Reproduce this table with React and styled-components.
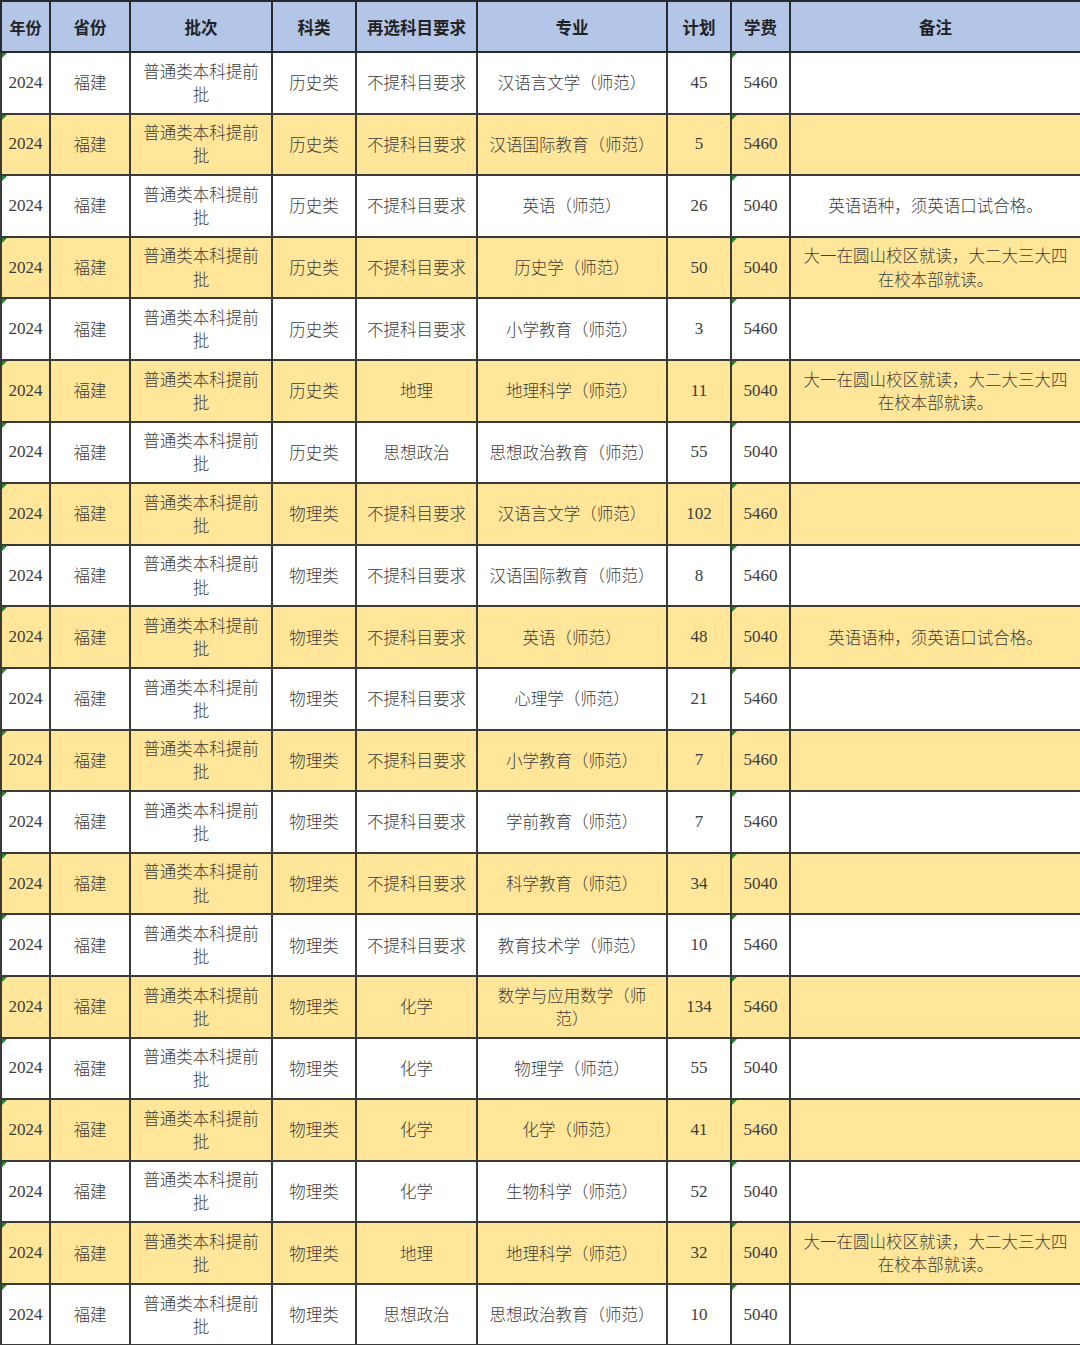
import React from 'react'
import styled, { createGlobalStyle } from 'styled-components';

const GlobalStyle = createGlobalStyle`
    html, body {
        margin:0;
        padding:0;
        background:#fff;
    }
`

const REMARK = "大一在圆山校区就读，大二大三大四在校本部就读。";
const ORAL = "英语语种，须英语口试合格。";

const rows = [
    ["历史类", "不提科目要求", "汉语言文学（师范）", "45", "5460", ""],
    ["历史类", "不提科目要求", "汉语国际教育（师范）", "5", "5460", ""],
    ["历史类", "不提科目要求", "英语（师范）", "26", "5040", ORAL],
    ["历史类", "不提科目要求", "历史学（师范）", "50", "5040", REMARK],
    ["历史类", "不提科目要求", "小学教育（师范）", "3", "5460", ""],
    ["历史类", "地理", "地理科学（师范）", "11", "5040", REMARK],
    ["历史类", "思想政治", "思想政治教育（师范）", "55", "5040", ""],
    ["物理类", "不提科目要求", "汉语言文学（师范）", "102", "5460", ""],
    ["物理类", "不提科目要求", "汉语国际教育（师范）", "8", "5460", ""],
    ["物理类", "不提科目要求", "英语（师范）", "48", "5040", ORAL],
    ["物理类", "不提科目要求", "心理学（师范）", "21", "5460", ""],
    ["物理类", "不提科目要求", "小学教育（师范）", "7", "5460", ""],
    ["物理类", "不提科目要求", "学前教育（师范）", "7", "5460", ""],
    ["物理类", "不提科目要求", "科学教育（师范）", "34", "5040", ""],
    ["物理类", "不提科目要求", "教育技术学（师范）", "10", "5460", ""],
    ["物理类", "化学", "数学与应用数学（师范）", "134", "5460", ""],
    ["物理类", "化学", "物理学（师范）", "55", "5040", ""],
    ["物理类", "化学", "化学（师范）", "41", "5460", ""],
    ["物理类", "化学", "生物科学（师范）", "52", "5040", ""],
    ["物理类", "地理", "地理科学（师范）", "32", "5040", REMARK],
    ["物理类", "思想政治", "思想政治教育（师范）", "10", "5040", ""],
];

const headers = ["年份", "省份", "批次", "科类", "再选科目要求", "专业", "计划", "学费", "备注"];
const widths = [49, 80, 142, 84, 121, 190, 64, 59, 291];

const App = () => {
    return (
        <>
            <GlobalStyle />
            <Table>
                <colgroup>
                    {widths.map((w, i) => <col key={i} style={{ width: w }} />)}
                </colgroup>
                <thead>
                    <HeadRow>
                        {headers.map((h) => <Th key={h}>{h}</Th>)}
                    </HeadRow>
                </thead>
                <tbody>
                    {rows.map((r, i) => (
                        <Row key={i} $odd={i % 2 === 1}>
                            <Td $num $flag>2024</Td>
                            <Td>福建</Td>
                            <Td>普通类本科提前批</Td>
                            <Td>{r[0]}</Td>
                            <Td>{r[1]}</Td>
                            <Td>{r[2]}</Td>
                            <Td $num>{r[3]}</Td>
                            <Td $num $flag>{r[4]}</Td>
                            <Td>{r[5]}</Td>
                        </Row>
                    ))}
                </tbody>
            </Table>
        </>
    )
}

export default App;

const Table = styled.table`
    width:1080px;
    table-layout:fixed;
    border-collapse:collapse;
    font-family:"Noto Sans CJK SC", "Liberation Serif", serif;
    text-spacing-trim:space-all;
`
const HeadRow = styled.tr`
    height:51px;
    background-color:#b4c6e7;
`
const Th = styled.th`
    border:2px solid #2a2a2a;
    padding:0 4px;
    font-size:16.5px;
    font-weight:700;
    color:#222;
    text-align:center;
    white-space:nowrap;
    &:first-child{
        padding:0;
        font-size:16px;
    }
`
const Row = styled.tr`
    height:61.6px;
    background-color:${(p) => (p.$odd ? '#ffe699' : '#fff')};
`
const Td = styled.td`
    position:relative;
    border:2px solid #3a3a3a;
    padding:0 6px;
    font-family:${(p) => (p.$num ? '"Liberation Serif", serif' : '"Noto Sans CJK SC", serif')};
    font-size:${(p) => (p.$num ? '17px' : '16.5px')};
    font-weight:300;
    line-height:1.4;
    color:#3c3c3c;
    text-align:center;
    vertical-align:middle;
    text-spacing-trim:space-all;
    &:first-child{
        padding:0;
    }
    &::before{
        content:'';
        display:${(p) => (p.$flag ? 'block' : 'none')};
        position:absolute;
        top:0;
        left:0;
        width:0;
        height:0;
        border-top:5px solid #1e8a2e;
        border-right:5px solid transparent;
    }
`
